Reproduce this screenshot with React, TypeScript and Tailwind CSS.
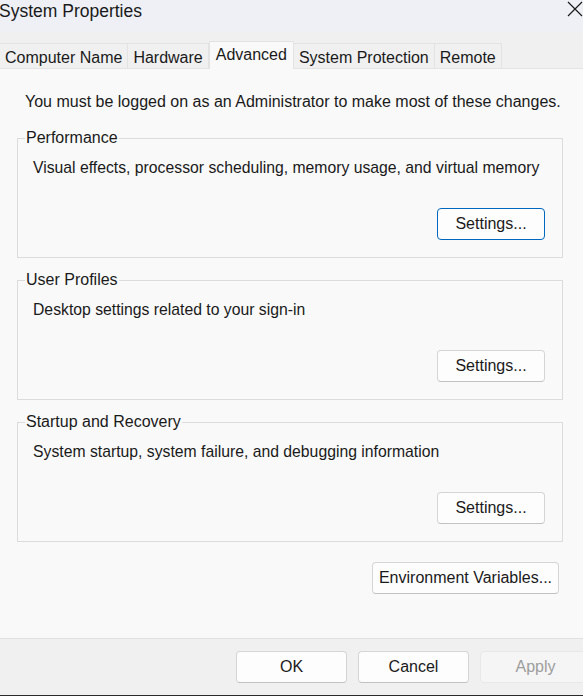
const FONT = { fontFamily: '"Liberation Sans", Arial, sans-serif' };

const TABS = ['Computer Name', 'Hardware', 'Advanced', 'System Protection', 'Remote'];

const GROUPS = [
  { title: 'Performance', text: 'Visual effects, processor scheduling, memory usage, and virtual memory', focused: true },
  { title: 'User Profiles', text: 'Desktop settings related to your sign-in', focused: false },
  { title: 'Startup and Recovery', text: 'System startup, system failure, and debugging information', focused: false },
];

function WinButton({ label, focused = false, disabled = false, className = '' }: { label: string; focused?: boolean; disabled?: boolean; className?: string }) {
  let look = 'bg-[#fdfdfd] border-[#d5d5d5] border-b-[#c2c2c2] text-[#1a1a1a]';
  if (focused) look = 'bg-[#fdfdfd] border-[#0067c0] text-[#1a1a1a]';
  if (disabled) look = 'bg-[#f5f5f5] border-[#e8e8e8] text-[#9d9d9d]';
  return (
    <button className={`h-[32px] shrink-0 rounded-[4px] border text-[16px] leading-[18px] ${look} ${className}`}>
      {label}
    </button>
  );
}

function GroupBox({ title, text, focused }: { title: string; text: string; focused: boolean }) {
  return (
    <fieldset className="ml-[17px] mr-[20px] border border-[#dcdcdc] p-0">
      <legend className="ml-[7px] px-px leading-[18px] text-[#1a1a1a]">{title}</legend>
      <div className="pl-[15px] pr-[17px] pb-[17px]">
        <p className="mt-[12px] whitespace-nowrap text-[15.75px] leading-[18px] text-[#1a1a1a]">{text}</p>
        <div className="mt-[31px] flex justify-end">
          <WinButton label="Settings..." focused={focused} className="w-[108px]" />
        </div>
      </div>
    </fieldset>
  );
}

export default function App() {
  return (
    <div className="flex h-[696px] w-[583px] flex-col overflow-hidden bg-[#f9f9f9] text-[16px]" style={FONT}>
      {/* title bar */}
      <div className="flex h-[32px] shrink-0 items-start justify-between bg-[#eef0f5]">
        <span className="-ml-[1px] mt-[1px] text-[17.5px] leading-[20px] text-[#1a1a1a]">System Properties</span>
        <svg width="16" height="16" viewBox="0 0 16 16" className="mt-[1px]">
          <path d="M1 1 L15 15 M15 1 L1 15" stroke="#1a1a1a" strokeWidth="1.2" fill="none" />
        </svg>
      </div>

      {/* tab strip */}
      <div className="flex h-[37px] shrink-0 items-end border-b border-[#e3e3e3] bg-[#f0f0f0]">
        {TABS.map((t, i) =>
          t === 'Advanced' ? (
            <div
              key={t}
              className="-mb-px flex h-[28px] items-start border-x border-t border-[#e3e3e3] bg-[#f9f9f9] px-[6px] pt-[3px] leading-[20px] text-[#1a1a1a]"
            >
              {t}
            </div>
          ) : (
            <div
              key={t}
              className={`flex h-[25px] items-start border-t border-r border-[#e3e3e3] bg-[#f0f0f0] px-[5px] pt-[4px] leading-[20px] text-[#1a1a1a] ${i === 0 ? '-ml-px border-l' : ''}`}
            >
              {t}
            </div>
          )
        )}
      </div>

      {/* page */}
      <div className="flex flex-1 flex-col">
        <p className="ml-[25px] mt-[24px] whitespace-nowrap leading-[18px] text-[#1a1a1a]">
          You must be logged on as an Administrator to make most of these changes.
        </p>
        <div className="mt-[18px] flex flex-col gap-[13px]">
          {GROUPS.map((g) => (
            <GroupBox key={g.title} {...g} />
          ))}
        </div>
        <div className="mr-[24px] mt-[20px] flex justify-end">
          <WinButton label="Environment Variables..." className="w-[187px]" />
        </div>
      </div>

      {/* footer */}
      <div className="flex h-[57px] shrink-0 items-start gap-[11px] border-t border-[#e0e0e0] bg-[#f0f0f0] pl-[236px] pt-[12px]">
        <WinButton label="OK" className="w-[111px]" />
        <WinButton label="Cancel" className="w-[111px]" />
        <WinButton label="Apply" disabled className="w-[111px]" />
      </div>
      <div className="h-px shrink-0 bg-[#2b2b2b]" />
    </div>
  );
}
